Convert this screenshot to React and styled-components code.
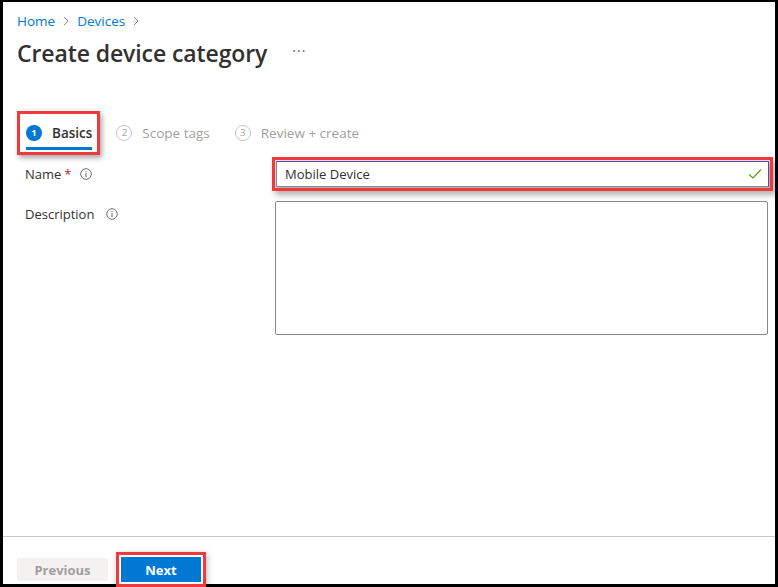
import React from "react";
import styled, { createGlobalStyle } from "styled-components";

const Global = createGlobalStyle`
  html, body { margin: 0; padding: 0; background: #000; }
  body { font-family: "Open Sans", "Noto Sans", sans-serif; color: #323130; }
  * { box-sizing: border-box; }
`;

const Frame = styled.div`
  width: 778px;
  height: 587px;
  background: #000;
  padding: 2px 3px 3px 3px;
`;

const Page = styled.div`
  width: 100%;
  height: 100%;
  background: #fff;
  display: flex;
  flex-direction: column;
`;

const Main = styled.div`
  flex: 1;
  padding: 10px 0 0 14px;
  display: flex;
  flex-direction: column;
`;

const Breadcrumb = styled.nav`
  display: flex;
  align-items: center;
  gap: 5px;
  font-size: 13.5px;
  line-height: 18px;
  height: 18px;
`;

const Crumb = styled.a`
  color: #0078d4;
  text-decoration: none;
`;

const Chevron = styled.svg`
  width: 10px;
  height: 10px;
  margin: 0 1px;
`;

const TitleRow = styled.div`
  display: flex;
  align-items: center;
  margin-top: 7px;
  height: 32px;
`;

const Title = styled.h1`
  margin: 0;
  font-size: 23px;
  font-weight: 600;
  color: #323130;
  letter-spacing: -0.1px;
`;

const More = styled.span`
  margin-left: 25px;
  font-size: 14px;
  color: #605e5c;
  letter-spacing: 1px;
  position: relative;
  top: -3px;
`;

const Tabs = styled.div`
  display: flex;
  align-items: center;
  margin-top: 42px;
  padding-left: 8px;
  gap: 25px;
`;

const Tab = styled.div`
  display: flex;
  align-items: center;
  gap: 10px;
  height: 32px;
  position: relative;
  font-size: 13.5px;
  font-weight: ${(p) => (p.$active ? 600 : 400)};
  color: ${(p) => (p.$active ? "#323130" : "#a19f9d")};
  ${(p) =>
    p.$active &&
    `
    &::after {
      content: "";
      position: absolute;
      left: 0;
      right: 0;
      bottom: -1px;
      height: 3px;
      background: #0078d4;
    }
  `}
`;

const TabHighlight = styled.div`
  margin-left: -8px;
  margin-right: -9px;
  padding: 3px 5px 3px 6px;
  border: 3px solid #f0393d;
  box-shadow: 2px 3px 5px rgba(0, 0, 0, 0.35);
`;

const StepCircle = styled.span`
  width: 16px;
  height: 16px;
  border-radius: 50%;
  display: inline-flex;
  align-items: center;
  justify-content: center;
  font-size: 9.5px;
  font-weight: 700;
  line-height: 1;
  ${(p) =>
    p.$active
      ? `background: #0078d4; color: #fff;`
      : `border: 1px solid #c8c6c4; color: #a19f9d; font-weight: 400;`}
`;

const Form = styled.div`
  display: grid;
  grid-template-columns: 250px 1fr;
  row-gap: 14px;
  margin-top: 6px;
  padding-left: 8px;
  padding-right: 7px;
`;

const Label = styled.div`
  display: flex;
  align-items: center;
  align-self: ${(p) => (p.$top ? "start" : "center")};
  gap: 4px;
  font-size: 13px;
  color: #323130;
  height: 26px;
`;

const Req = styled.span`
  color: #a4262c;
  margin-left: -1px;
  margin-right: 4px;
`;

const Spacer = styled.span`
  width: 4px;
`;

const InfoIcon = styled.svg`
  width: 12px;
  height: 12px;
`;

const InputBox = styled.div`
  position: relative;
  height: 26px;
  border: 1px solid #8a8886;
  border-right-color: #6b3fa0;
  border-top-color: #6b3fa0;
  display: flex;
  align-items: center;
  padding: 0 8px;
  font-size: 13px;
  color: #323130;
  outline: 3px solid #f0393d;
  outline-offset: 1px;
  box-shadow: 3px 4px 6px 4px rgba(0, 0, 0, 0.3);
  margin: 0 -1px 0 1px;
  background: #fff;
`;

const Check = styled.svg`
  position: absolute;
  right: 6px;
  top: 6px;
  width: 14px;
  height: 12px;
`;

const TextArea = styled.div`
  height: 134px;
  border: 1px solid #8a8886;
  border-radius: 2px;
  background: #fff;
`;

const Footer = styled.footer`
  height: 48px;
  border-top: 1px solid #c8c6c4;
  display: flex;
  align-items: flex-end;
  gap: 13px;
  padding: 0 0 0 14px;
`;

const Button = styled.button`
  font-family: inherit;
  font-size: 13px;
  font-weight: 700;
  height: ${(p) => (p.$primary ? "25px" : "23px")};
  width: ${(p) => p.$w};
  margin-bottom: ${(p) => (p.$primary ? "2px" : "3px")};
  border: none;
  border-radius: ${(p) => (p.$primary ? "0" : "2px")};
  background: ${(p) => (p.$primary ? "#0078d4" : "#f3f2f1")};
  color: ${(p) => (p.$primary ? "#fff" : "#a19f9d")};
  padding: 0;
  ${(p) =>
    p.$primary &&
    `
    outline: 3px solid #f0393d;
    outline-offset: 2px;
    box-shadow: 0 0 0 2px #fff, 1px 2px 6px 5px rgba(0,0,0,0.3);
  `}
`;

const ChevronIcon = () => (
  <Chevron viewBox="0 0 10 10">
    <path d="M3 1 L7 5 L3 9" fill="none" stroke="#8a8886" strokeWidth="1" />
  </Chevron>
);

const Info = () => (
  <InfoIcon viewBox="0 0 12 12">
    <circle cx="6" cy="6" r="5.3" fill="none" stroke="#605e5c" strokeWidth="0.9" />
    <line x1="6" y1="5.2" x2="6" y2="9" stroke="#605e5c" strokeWidth="1" />
    <circle cx="6" cy="3.5" r="0.6" fill="#605e5c" />
  </InfoIcon>
);

export default function App() {
  return (
    <>
      <Global />
      <Frame>
        <Page>
          <Main>
            <Breadcrumb>
              <Crumb>Home</Crumb>
              <ChevronIcon />
              <Crumb>Devices</Crumb>
              <ChevronIcon />
            </Breadcrumb>
            <TitleRow>
              <Title>Create device category</Title>
              <More>···</More>
            </TitleRow>
            <Tabs>
              <TabHighlight>
                <Tab $active>
                  <StepCircle $active>1</StepCircle>
                  Basics
                </Tab>
              </TabHighlight>
              <Tab>
                <StepCircle>2</StepCircle>
                Scope tags
              </Tab>
              <Tab>
                <StepCircle>3</StepCircle>
                Review + create
              </Tab>
            </Tabs>
            <Form>
              <Label>
                Name <Req>*</Req>
                <Info />
              </Label>
              <InputBox>
                Mobile Device
                <Check viewBox="0 0 14 12">
                  <path d="M1 6.5 L5 10 L13 1.5" fill="none" stroke="#57a300" strokeWidth="1.2" />
                </Check>
              </InputBox>
              <Label $top>
                Description
                <Spacer />
                <Info />
              </Label>
              <TextArea />
            </Form>
          </Main>
          <Footer>
            <Button $w="91px">Previous</Button>
            <Button $primary $w="80px">Next</Button>
          </Footer>
        </Page>
      </Frame>
    </>
  );
}
